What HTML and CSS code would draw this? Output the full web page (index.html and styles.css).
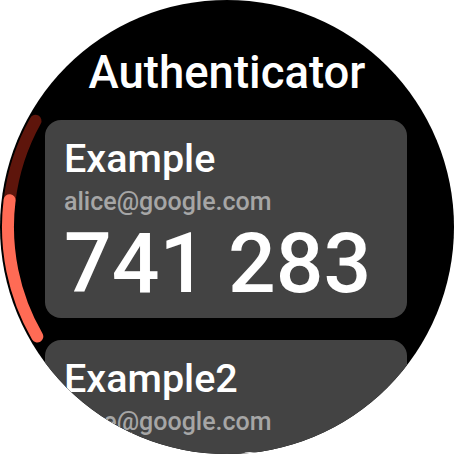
FILE: index.html
```html
<!DOCTYPE html>
<html>
<head>
<meta charset="utf-8">
<link rel="stylesheet" href="styles.css">
</head>
<body>
<div class="screen">
  <div class="title">Authenticator</div>
  <div class="list">
    <div class="card">
      <div class="name">Example</div>
      <div class="email">alice@google.com</div>
      <div class="code">741 283</div>
    </div>
    <div class="card">
      <div class="name">Example2</div>
      <div class="email">alice@google.com</div>
      <div class="code">461 308</div>
    </div>
  </div>
  <svg class="progress" width="454" height="454" viewBox="0 0 454 454">
    <path d="M35.5 120.8 A219 219 0 0 0 9.6 200.3" fill="none" stroke="#5e150b" stroke-width="12" stroke-linecap="round"/>
    <path d="M9.6 200.3 A219 219 0 0 0 37.3 336.5" fill="none" stroke="#ff6b55" stroke-width="12" stroke-linecap="round"/>
  </svg>
</div>
</body>
</html>
```
FILE: styles.css
```css
html, body {
  margin: 0;
  padding: 0;
  background: #ffffff;
}
body {
  width: 454px;
  height: 454px;
  overflow: hidden;
  font-family: Roboto, "Liberation Sans", sans-serif;
}
.screen {
  position: relative;
  width: 454px;
  height: 454px;
  border-radius: 50%;
  overflow: hidden;
  background: #000;
  box-sizing: border-box;
  padding-top: 46px;
}
.title {
  font-size: 45.5px;
  line-height: 53px;
  font-weight: 500;
  color: #fff;
  text-align: center;
}
.list {
  display: flex;
  flex-direction: column;
  gap: 22px;
  margin-top: 21px;
  padding: 0 47px 0 45px;
}
.card {
  background: #434343;
  border-radius: 16px;
  padding: 15px 19px 6px 19px;
  display: flex;
  flex-direction: column;
}
.name {
  font-size: 39.5px;
  line-height: 47px;
  color: #fff;
  font-weight: 500;
}
.email {
  margin-top: 5px;
  font-size: 25px;
  line-height: 29px;
  font-weight: 500;
  color: #a6a6a6;
}
.code {
  font-size: 84px;
  line-height: 96px;
  font-weight: 500;
  color: #fff;
}
.progress {
  position: absolute;
  left: 0;
  top: 0;
}
```
